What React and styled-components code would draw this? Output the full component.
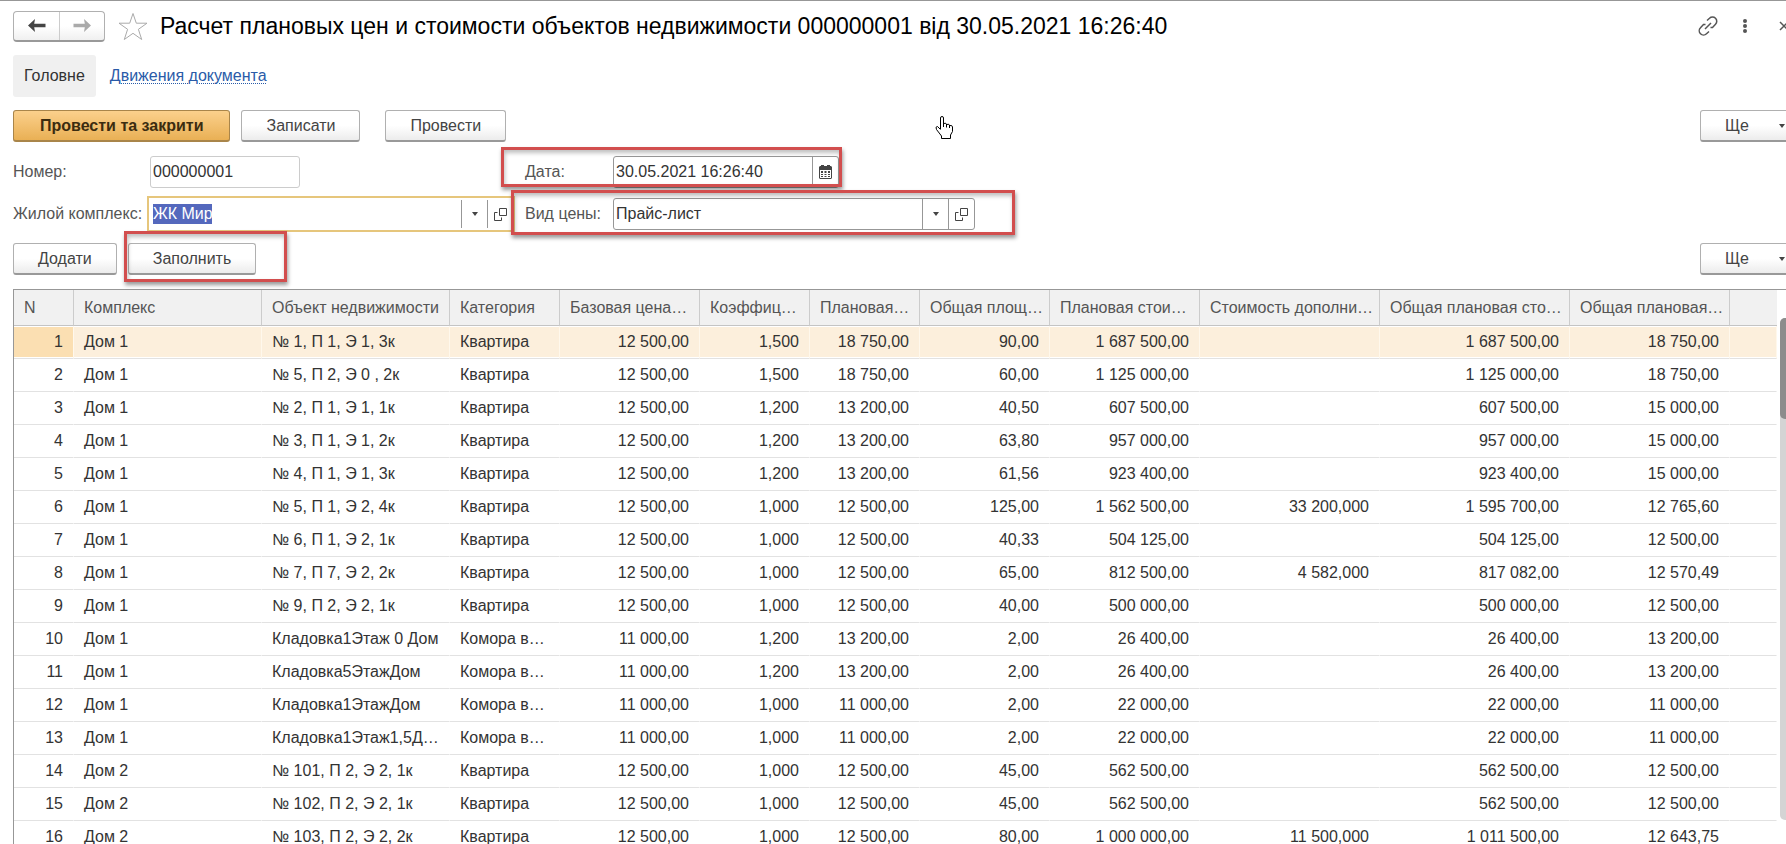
import React, { useState } from 'react'
import styled, { createGlobalStyle, css } from 'styled-components'

const GlobalStyle = createGlobalStyle`
  * {
    box-sizing: border-box;
  }

  body {
    margin: 0;
    background: #fff;
    color: #333;
    font: 16px/20px 'Liberation Sans', Arial, sans-serif;
  }

  button,
  input {
    font: inherit;
    color: inherit;
  }
`

const Viewport = styled.div`
  position: relative;
  height: 100vh;
  overflow: hidden;
  border-top: 1px solid #979797;
`

/* The form runs slightly past the right edge of the window */
const Form = styled.main`
  display: flex;
  flex-direction: column;
  height: 100%;
  margin-right: -12px;
  padding-left: 13px;
`

const TitleBar = styled.header`
  display: flex;
  align-items: center;
  height: 50px;
`

const NavButtons = styled.div`
  display: flex;
  height: 31px;
  border: 1px solid #b0b0b0;
  border-bottom: 2px solid #999;
  border-radius: 4px;
  background: linear-gradient(#fff 50%, #f0f0f0);
`

const NavButton = styled.button`
  display: flex;
  align-items: center;
  justify-content: center;
  width: 45px;
  padding: 0;
  border: 0;
  background: transparent;

  & + & {
    border-left: 1px solid #ccc;
  }
`

const IconButton = styled.button`
  display: flex;
  padding: 0;
  border: 0;
  background: transparent;
`

const Star = styled(IconButton)`
  margin: 0 12px 0 13px;
`

const Title = styled.h1`
  flex: 1;
  margin: 0;
  color: #000;
  font-size: 23px;
  font-weight: normal;
  line-height: 28px;
  white-space: nowrap;
`

const WindowTools = styled.div`
  display: flex;
  align-items: center;
  gap: 25px;
  padding-right: 9px;
`

const Close = styled(IconButton)`
  margin-left: 7px;
`

const Tabs = styled.nav`
  display: flex;
  align-items: center;
  gap: 14px;
  margin-top: 4px;
`

const ActiveTab = styled.span`
  padding: 11px;
  border-radius: 3px;
  background: #f0f0f0;
`

const TabLink = styled.a`
  color: #2a5ba8;
  text-decoration: underline dotted 1px;
  text-underline-offset: 2px;
`

const Toolbar = styled.div`
  display: flex;
  gap: 11px;
  margin-top: ${props => props.$top}px;
`

const Button = styled.button`
  height: 32px;
  padding: 0 24px;
  border: 1px solid #b0b0b0;
  border-bottom: 2px solid #999;
  border-radius: 3px;
  background: linear-gradient(#fff 50%, #ececec);
  color: #444;
  white-space: nowrap;

  ${props =>
    props.$primary &&
    css`
      padding: 0 26px;
      border-color: #a9854a;
      background: linear-gradient(#fbd08c, #e9b055);
      color: #3b2c10;
      font-weight: bold;
    `}
`

const Post = styled(Button)`
  margin-left: 14px;
`

const More = styled(Button)`
  display: flex;
  align-items: center;
  justify-content: space-between;
  width: 98px;
  margin-left: auto;
  padding: 0 12px 0 24px;
`

const Fields = styled.div`
  display: grid;
  grid-template-columns: 488px 1fr;
  row-gap: 6px;
  margin-top: 12px;
`

const Field = styled.div`
  position: relative;
  display: flex;
  align-items: center;
  height: 36px;
`

const Label = styled.label`
  flex: none;
  width: 137px;
  color: #555;
  white-space: nowrap;
`

const IndentedLabel = styled(Label)`
  width: 112px;
  padding-left: 24px;
`

const Control = styled.div`
  display: flex;
  flex: none;
  width: ${props => props.$width}px;
  height: 32px;
  border: 1px solid ${props => (props.$light ? '#ccc' : '#979797')};
  border-radius: 3px;
  background: #fff;

  ${props =>
    props.$focused &&
    css`
      height: 36px;
      margin-left: -3px;
      padding: 2px 0 2px 2px;
      border: 2px solid #e6c67c;
      border-radius: 0;
    `}
`

const Input = styled.input`
  flex: 1;
  min-width: 0;
  padding: 0 2px;
  border: 0;
  outline: 0;
  background: transparent;
`

const SelectedInput = styled(Input)`
  flex: none;
  width: 59px;
  height: 20px;
  align-self: center;
  margin: 0 auto 0 2px;
  padding: 0;
  background: #5468bd;
  color: #fff;
`

const FieldButton = styled.button`
  display: flex;
  align-items: center;
  justify-content: center;
  width: 26px;
  padding: 0;
  border: 0;
  border-left: 1px solid #979797;
  background: transparent;
`

/* Marks drawn over the form */
const Highlight = styled.div`
  position: absolute;
  top: ${props => props.$top}px;
  left: ${props => props.$left}px;
  width: ${props => props.$width}px;
  height: ${props => props.$height}px;
  border: 3px solid #d24e4e;
  box-shadow: 1px 3px 4px rgba(0, 0, 0, 0.4),
    inset 1px 3px 4px rgba(0, 0, 0, 0.25);
  pointer-events: none;
`

const Anchor = styled.div`
  position: relative;
`

const Cursor = styled.svg`
  position: absolute;
  top: 115px;
  left: 935px;
  pointer-events: none;
`

const TableArea = styled.div`
  display: flex;
  flex: 1;
  min-height: 0;
  margin-top: 14px;
  border-top: 1px solid #979797;
  border-left: 1px solid #979797;
`

const TableScroll = styled.div`
  flex: 1;
  overflow: hidden;
`

const Table = styled.table`
  width: 100%;
  table-layout: fixed;
  border-collapse: separate;
  border-spacing: 0;
`

const Th = styled.th`
  height: 36px;
  padding: 0 0 0 10px;
  border-right: 1px solid #ccc;
  border-bottom: 1px solid #c4c4c4;
  background: #f1f1f1;
  color: #555;
  font-weight: normal;
  text-align: left;
  white-space: nowrap;

  &:last-child {
    border-right: 0;
  }
`

const Td = styled.td`
  height: 33px;
  padding: 0 10px;
  border-right: 1px solid transparent;
  border-bottom: 1px solid #e2e2e2;
  text-align: ${props => (props.$numeric ? 'right' : 'left')};
  white-space: nowrap;
`

const Tr = styled.tr`
  ${props =>
    props.$selected &&
    css`
      ${Td} {
        border-right-color: #fff8ec;
        background: #fcefdc;
        box-shadow: inset 0 1px #fff, inset 0 -1px #fff;
      }

      ${Td}:first-child {
        background: #fbdfb2;
      }
    `}
`

const ScrollBar = styled.div`
  display: flex;
  flex-direction: column;
  align-items: center;
  width: 18px;
  margin: 12px 0 8px 3px;
`

const Track = styled.div`
  flex: 1;
  width: 100%;
  margin: 12px 0;
  border-radius: 5px;
  background: #d4d4d4;
`

const Thumb = styled.div`
  height: 101px;
  border-radius: 5px;
  background: #8c8c8c;
`

const Arrow = ({ color, flip }) => (
  <svg width="18" height="13" viewBox="0 0 18 13" fill={color}>
    <path
      d="M0 6.500 7 0 6.200 4.700H17.500v3.600H6.200L7 13z"
      transform={flip ? 'matrix(-1 0 0 1 18 0)' : undefined}
    />
  </svg>
)

const Caret = ({ up, color = '#444' }) => (
  <svg width="6" height="4" viewBox="0 0 6 4" fill={color}>
    <path d={up ? 'M0 4h6L3 0z' : 'M0 0h6L3 4z'} />
  </svg>
)

const OpenIcon = () => (
  <svg width="13" height="13" viewBox="0 0 13 13" fill="none" stroke="#444">
    <path d="M5.500.5h7v7h-7zM3.500 4.500h-3v8h7v-3" />
  </svg>
)

const CalendarIcon = () => (
  <svg width="13" height="14" viewBox="0 0 13 14" fill="#444">
    <path
      fillRule="evenodd"
      d="M1 1h1V0h3v1h3V0h3v1h1l1 1v11l-1 1H1l-1-1V2zM1 5v8h11V5z"
    />
    <path d="M2 6h2v2H2zm3.500 0h2v2h-2zM9 6h2v2H9zM2 9h2v1H2zm3.500 0h2v1h-2zM9 9h2v1H9zM2 11h2v1H2zm3.500 0h2v1h-2zM9 11h2v1H9z" />
  </svg>
)

const columns = [
  { title: 'N', width: 60, numeric: true },
  { title: 'Комплекс', width: 188 },
  { title: 'Объект недвижимости', width: 188 },
  { title: 'Категория', width: 110 },
  { title: 'Базовая цена…', width: 140, numeric: true },
  { title: 'Коэффиц…', width: 110, numeric: true },
  { title: 'Плановая…', width: 110, numeric: true },
  { title: 'Общая площ…', width: 130, numeric: true },
  { title: 'Плановая стои…', width: 150, numeric: true },
  { title: 'Стоимость дополни…', width: 180, numeric: true },
  { title: 'Общая плановая сто…', width: 190, numeric: true },
  { title: 'Общая плановая…', width: 160, numeric: true },
]

const flat = 'Квартира'
const storage = 'Комора в…'

const rows = [
  ['Дом 1', '№ 1, П 1, Э 1, 3к', flat, '12 500,00', '1,500', '18 750,00', '90,00', '1 687 500,00', '', '1 687 500,00', '18 750,00'],
  ['Дом 1', '№ 5, П 2, Э 0 , 2к', flat, '12 500,00', '1,500', '18 750,00', '60,00', '1 125 000,00', '', '1 125 000,00', '18 750,00'],
  ['Дом 1', '№ 2, П 1, Э 1, 1к', flat, '12 500,00', '1,200', '13 200,00', '40,50', '607 500,00', '', '607 500,00', '15 000,00'],
  ['Дом 1', '№ 3, П 1, Э 1, 2к', flat, '12 500,00', '1,200', '13 200,00', '63,80', '957 000,00', '', '957 000,00', '15 000,00'],
  ['Дом 1', '№ 4, П 1, Э 1, 3к', flat, '12 500,00', '1,200', '13 200,00', '61,56', '923 400,00', '', '923 400,00', '15 000,00'],
  ['Дом 1', '№ 5, П 1, Э 2, 4к', flat, '12 500,00', '1,000', '12 500,00', '125,00', '1 562 500,00', '33 200,000', '1 595 700,00', '12 765,60'],
  ['Дом 1', '№ 6, П 1, Э 2, 1к', flat, '12 500,00', '1,000', '12 500,00', '40,33', '504 125,00', '', '504 125,00', '12 500,00'],
  ['Дом 1', '№ 7, П 7, Э 2, 2к', flat, '12 500,00', '1,000', '12 500,00', '65,00', '812 500,00', '4 582,000', '817 082,00', '12 570,49'],
  ['Дом 1', '№ 9, П 2, Э 2, 1к', flat, '12 500,00', '1,000', '12 500,00', '40,00', '500 000,00', '', '500 000,00', '12 500,00'],
  ['Дом 1', 'Кладовка1Этаж 0 Дом', storage, '11 000,00', '1,200', '13 200,00', '2,00', '26 400,00', '', '26 400,00', '13 200,00'],
  ['Дом 1', 'Кладовка5ЭтажДом', storage, '11 000,00', '1,200', '13 200,00', '2,00', '26 400,00', '', '26 400,00', '13 200,00'],
  ['Дом 1', 'Кладовка1ЭтажДом', storage, '11 000,00', '1,000', '11 000,00', '2,00', '22 000,00', '', '22 000,00', '11 000,00'],
  ['Дом 1', 'Кладовка1Этаж1,5Д…', storage, '11 000,00', '1,000', '11 000,00', '2,00', '22 000,00', '', '22 000,00', '11 000,00'],
  ['Дом 2', '№ 101, П 2, Э 2, 1к', flat, '12 500,00', '1,000', '12 500,00', '45,00', '562 500,00', '', '562 500,00', '12 500,00'],
  ['Дом 2', '№ 102, П 2, Э 2, 1к', flat, '12 500,00', '1,000', '12 500,00', '45,00', '562 500,00', '', '562 500,00', '12 500,00'],
  ['Дом 2', '№ 103, П 2, Э 2, 2к', flat, '12 500,00', '1,000', '12 500,00', '80,00', '1 000 000,00', '11 500,000', '1 011 500,00', '12 643,75'],
]

const ObjectsTable = () => {
  const [selected, setSelected] = useState(0)

  return (
    <TableArea>
      <TableScroll>
        <Table>
          <colgroup>
            {columns.map(column => (
              <col key={column.title} width={column.width} />
            ))}
            <col />
          </colgroup>
          <thead>
            <tr>
              {columns.map(column => (
                <Th key={column.title}>{column.title}</Th>
              ))}
              <Th />
            </tr>
          </thead>
          <tbody>
            {rows.map((row, index) => (
              <Tr
                key={row[1]}
                $selected={index === selected}
                onClick={() => setSelected(index)}
              >
                {[index + 1, ...row].map((value, i) => (
                  <Td key={columns[i].title} $numeric={columns[i].numeric}>
                    {value}
                  </Td>
                ))}
                <Td />
              </Tr>
            ))}
          </tbody>
        </Table>
      </TableScroll>
      <ScrollBar>
        <Caret up color="#aaa" />
        <Track>
          <Thumb />
        </Track>
        <Caret />
      </ScrollBar>
    </TableArea>
  )
}

const App = () => (
  <Viewport>
    <GlobalStyle />
    <Form>
      <TitleBar>
        <NavButtons>
          <NavButton aria-label="Назад">
            <Arrow color="#444" />
          </NavButton>
          <NavButton aria-label="Вперед">
            <Arrow color="#aaa" flip />
          </NavButton>
        </NavButtons>
        <Star aria-label="Вибране">
          <svg width="30" height="29" viewBox="0 0 30 29" fill="#fff" stroke="#aaa">
            <path d="M15 1.500 18.300 11.200H29L20.400 17.300 23.700 27.500 15 21.300 6.300 27.500 9.600 17.300 1 11.200H11.700z" />
          </svg>
        </Star>
        <Title>
          Расчет плановых цен и стоимости объектов недвижимости 000000001 від
          30.05.2021 16:26:40
        </Title>
        <WindowTools>
          <IconButton aria-label="Посилання">
            <svg width="20" height="20" viewBox="0 0 20 20" fill="none" stroke="#555" strokeWidth="1.500">
              <path d="M9 4.500 11.500 2.300a4 4 0 0 1 6 6L14.500 11.500H12.500M11 15.500 8.500 17.700a4 4 0 0 1-6-6L5.500 8.500H7.500M7 13 13 7" />
            </svg>
          </IconButton>
          <IconButton aria-label="Меню">
            <svg width="4" height="14" viewBox="0 0 4 14" fill="#555">
              <circle cx="2" cy="2" r="2" />
              <circle cx="2" cy="7" r="2" />
              <circle cx="2" cy="12" r="2" />
            </svg>
          </IconButton>
          <Close aria-label="Закрити">
            <svg width="10" height="10" viewBox="0 0 10 10" stroke="#555" strokeWidth="1.500">
              <path d="M1 1 9 9M9 1 1 9" />
            </svg>
          </Close>
        </WindowTools>
      </TitleBar>
      <Tabs>
        <ActiveTab>Головне</ActiveTab>
        <TabLink href="#movements">Движения документа</TabLink>
      </Tabs>
      <Toolbar $top={13}>
        <Button $primary>Провести та закрити</Button>
        <Button>Записати</Button>
        <Post>Провести</Post>
        <More>
          Ще <Caret />
        </More>
      </Toolbar>
      <Fields>
        <Field>
          <Label htmlFor="number">Номер:</Label>
          <Control $width={150} $light>
            <Input id="number" defaultValue="000000001" />
          </Control>
        </Field>
        <Field>
          <IndentedLabel htmlFor="date">Дата:</IndentedLabel>
          <Control $width={226}>
            <Input id="date" defaultValue="30.05.2021 16:26:40" />
            <FieldButton aria-label="Календар">
              <CalendarIcon />
            </FieldButton>
          </Control>
          <Highlight $top={-7} $left={0} $width={341} $height={40} />
        </Field>
        <Field>
          <Label htmlFor="complex">Жилой комплекс:</Label>
          <Control $width={368} $focused>
            <SelectedInput id="complex" defaultValue="ЖК Мир" />
            <FieldButton aria-label="Вибрати">
              <Caret />
            </FieldButton>
            <FieldButton aria-label="Відкрити">
              <OpenIcon />
            </FieldButton>
          </Control>
        </Field>
        <Field>
          <IndentedLabel htmlFor="price">Вид цены:</IndentedLabel>
          <Control $width={362}>
            <Input id="price" defaultValue="Прайс-лист" />
            <FieldButton aria-label="Вибрати">
              <Caret />
            </FieldButton>
            <FieldButton aria-label="Відкрити">
              <OpenIcon />
            </FieldButton>
          </Control>
          <Highlight $top={-6} $left={10} $width={504} $height={45} />
        </Field>
      </Fields>
      <Toolbar $top={11}>
        <Button>Додати</Button>
        <Anchor>
          <Button>Заполнить</Button>
          <Highlight $top={-12} $left={-4} $width={163} $height={51} />
        </Anchor>
        <More>
          Ще <Caret />
        </More>
      </Toolbar>
      <ObjectsTable />
    </Form>
    <Cursor width="18" height="23" viewBox="0 0 18 23" fill="#fff" stroke="#000">
      <path d="M5.500 13V2Q5.500.5 7 .5T8.500 2V7.500Q11.500 6.500 11.500 8.500 14.500 7.500 14.500 9.500 17.500 9 17.500 11V15.500L15.500 19V22.500H6.500V20L1.500 13.500Q0 10.500 2.500 10.500L5.500 13.500M8.500 7V11M11.500 8V11.500M14.500 9V12" />
    </Cursor>
  </Viewport>
)

export default App
